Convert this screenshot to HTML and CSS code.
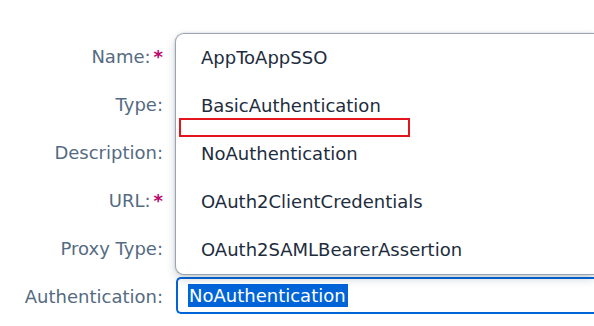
FILE: index.html
```html
<!DOCTYPE html>
<html>
<head>
<meta charset="utf-8">
<link rel="stylesheet" href="styles.css">
</head>
<body>
<div class="form">
  <div class="label">Name:<span class="req">*</span></div>
  <div class="field"></div>
  <div class="label">Type:</div>
  <div class="field"></div>
  <div class="label">Description:</div>
  <div class="field"></div>
  <div class="label">URL:<span class="req">*</span></div>
  <div class="field"></div>
  <div class="label">Proxy Type:</div>
  <div class="field"></div>
  <div class="label">Authentication:</div>
  <div class="field">
    <div class="combo">
      <div class="input"><span class="sel">NoAuthentication</span></div>
      <ul class="popup">
        <li class="item">AppToAppSSO</li>
        <li class="item">BasicAuthentication</li>
        <li class="item">NoAuthentication</li>
        <li class="item">OAuth2ClientCredentials</li>
        <li class="item">OAuth2SAMLBearerAssertion</li>
        <li class="mark"></li>
      </ul>
    </div>
  </div>
</div>
</body>
</html>
```

FILE: styles.css
```css
html, body {
  margin: 0;
  padding: 0;
  background: #ffffff;
  overflow: hidden;
}
body {
  font-family: "DejaVu Sans", sans-serif;
  font-size: 18px;
  width: 594px;
  height: 326px;
}
.form {
  display: grid;
  grid-template-columns: 163px 1fr;
  grid-template-rows: repeat(6, 48px);
  column-gap: 13px;
  padding-top: 33px;
}
.label {
  text-align: right;
  line-height: 48px;
  color: #556b82;
  white-space: nowrap;
}
.req {
  color: #ba066c;
  font-weight: bold;
  margin-left: 3px;
}
.field {
  min-width: 0;
}
.combo {
  position: relative;
  margin-top: 4px;
}
.input {
  box-sizing: border-box;
  height: 37px;
  width: 100%;
  border: 2px solid #0064d9;
  border-right: none;
  border-radius: 5px 0 0 5px;
  padding: 5px 0 0 10px;
  background: #ffffff;
}
.sel {
  display: inline-block;
  line-height: 23px;
  background: #0064d9;
  color: #ffffff;
  padding: 0 2px 0 1px;
}
.popup {
  position: absolute;
  left: -1px;
  right: 0;
  bottom: calc(100% + 2px);
  margin: 0;
  padding: 0;
  list-style: none;
  background: #ffffff;
  border: 1px solid #9aa5b1;
  border-right: none;
  border-radius: 9px 0 0 9px;
  box-shadow: 0 0 2px rgba(34, 53, 72, 0.25), 0 4px 10px rgba(34, 53, 72, 0.22);
}
.item {
  height: 48px;
  line-height: 48px;
  padding-left: 25px;
  color: #1d2d3e;
  white-space: nowrap;
}
.mark {
  position: absolute;
  left: 3px;
  top: 84px;
  width: 227px;
  height: 15px;
  border: 2px solid #e3141c;
}
```
